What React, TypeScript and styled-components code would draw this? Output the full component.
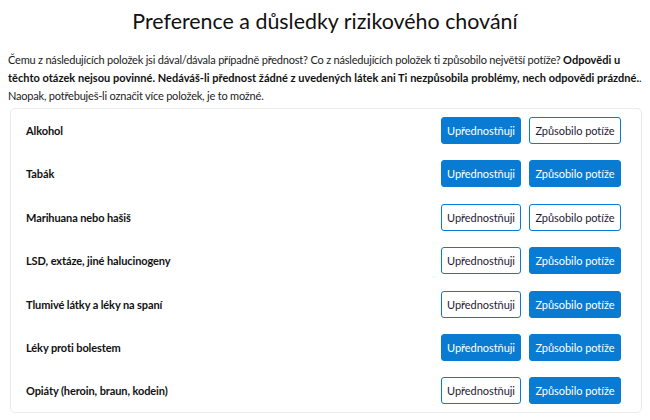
import styled, { createGlobalStyle } from "styled-components";

const GlobalStyle = createGlobalStyle`
    body {
        margin: 0;
        background: #ffffff;
        font-family: Lato, "Noto Sans", sans-serif;
        color: #1b1b1b;
    }
`;

const Page = styled.div`
    padding: 8px 8px 0 8px;
`;

const Title = styled.h1`
    margin: 0;
    text-align: center;
    font-size: 21.4px;
    font-weight: 400;
    line-height: 26px;
    color: #111;
`;

const Intro = styled.p`
    margin: 17px 0 3px 0;
    font-size: 11px;
    letter-spacing: -0.2px;
    line-height: 18px;
    color: #222;
    white-space: nowrap;

    b {
        font-weight: 700;
        letter-spacing: 0.02px;
        color: #111;
    }
`;

const Card = styled.div`
    margin-left: 2px;
    border: 1px solid #ebebeb;
    border-radius: 5px;
    padding: 8px 20px 8px 15px;
    display: flex;
    flex-direction: column;
    gap: 16.4px;
`;

const Row = styled.div`
    display: flex;
    align-items: center;
    justify-content: space-between;
    height: 27px;
`;

const Label = styled.span`
    font-size: 11px;
    letter-spacing: -0.1px;
    font-weight: 700;
    color: #111;
`;

const Buttons = styled.div`
    display: flex;
    gap: 8px;
`;

const Choice = styled.button<{ $on: boolean; $w: number }>`
    width: ${(p) => p.$w}px;
    height: 27px;
    padding: 0;
    border-radius: 3px;
    border: 1px solid #0a7bd2;
    background: ${(p) => (p.$on ? "#0a7bd2" : "#ffffff")};
    color: ${(p) => (p.$on ? "#ffffff" : "#1f1a33")};
    font-family: Lato, "Noto Sans", sans-serif;
    font-size: 11px;
    letter-spacing: -0.05px;
    white-space: nowrap;
    cursor: pointer;
`;

const items: [string, boolean, boolean][] = [
    ["Alkohol", true, false],
    ["Tabák", true, true],
    ["Marihuana nebo hašiš", false, false],
    ["LSD, extáze, jiné halucinogeny", false, true],
    ["Tlumivé látky a léky na spaní", false, true],
    ["Léky proti bolestem", true, true],
    ["Opiáty (heroin, braun, kodein)", false, true],
];

export default function App() {
    return (
        <Page>
            <GlobalStyle />
            <Title>Preference a důsledky rizikového chování</Title>
            <Intro>
                Čemu z následujících položek jsi dával/dávala případně přednost? Co z
                následujících položek ti způsobilo největší potíže? <b>Odpovědi u</b>
                <br />
                <b>
                    těchto otázek nejsou povinné. Nedáváš-li přednost žádné z uvedených
                    látek ani Ti nezpůsobila problémy, nech odpovědi prázdné.
                </b>
                .
                <br />
                Naopak, potřebuješ-li označit více položek, je to možné.
            </Intro>
            <Card>
                {items.map(([name, pref, trouble]) => (
                    <Row key={name}>
                        <Label>{name}</Label>
                        <Buttons>
                            <Choice $on={pref} $w={80}>Upřednostňuji</Choice>
                            <Choice $on={trouble} $w={92}>Způsobilo potíže</Choice>
                        </Buttons>
                    </Row>
                ))}
            </Card>
        </Page>
    );
}
